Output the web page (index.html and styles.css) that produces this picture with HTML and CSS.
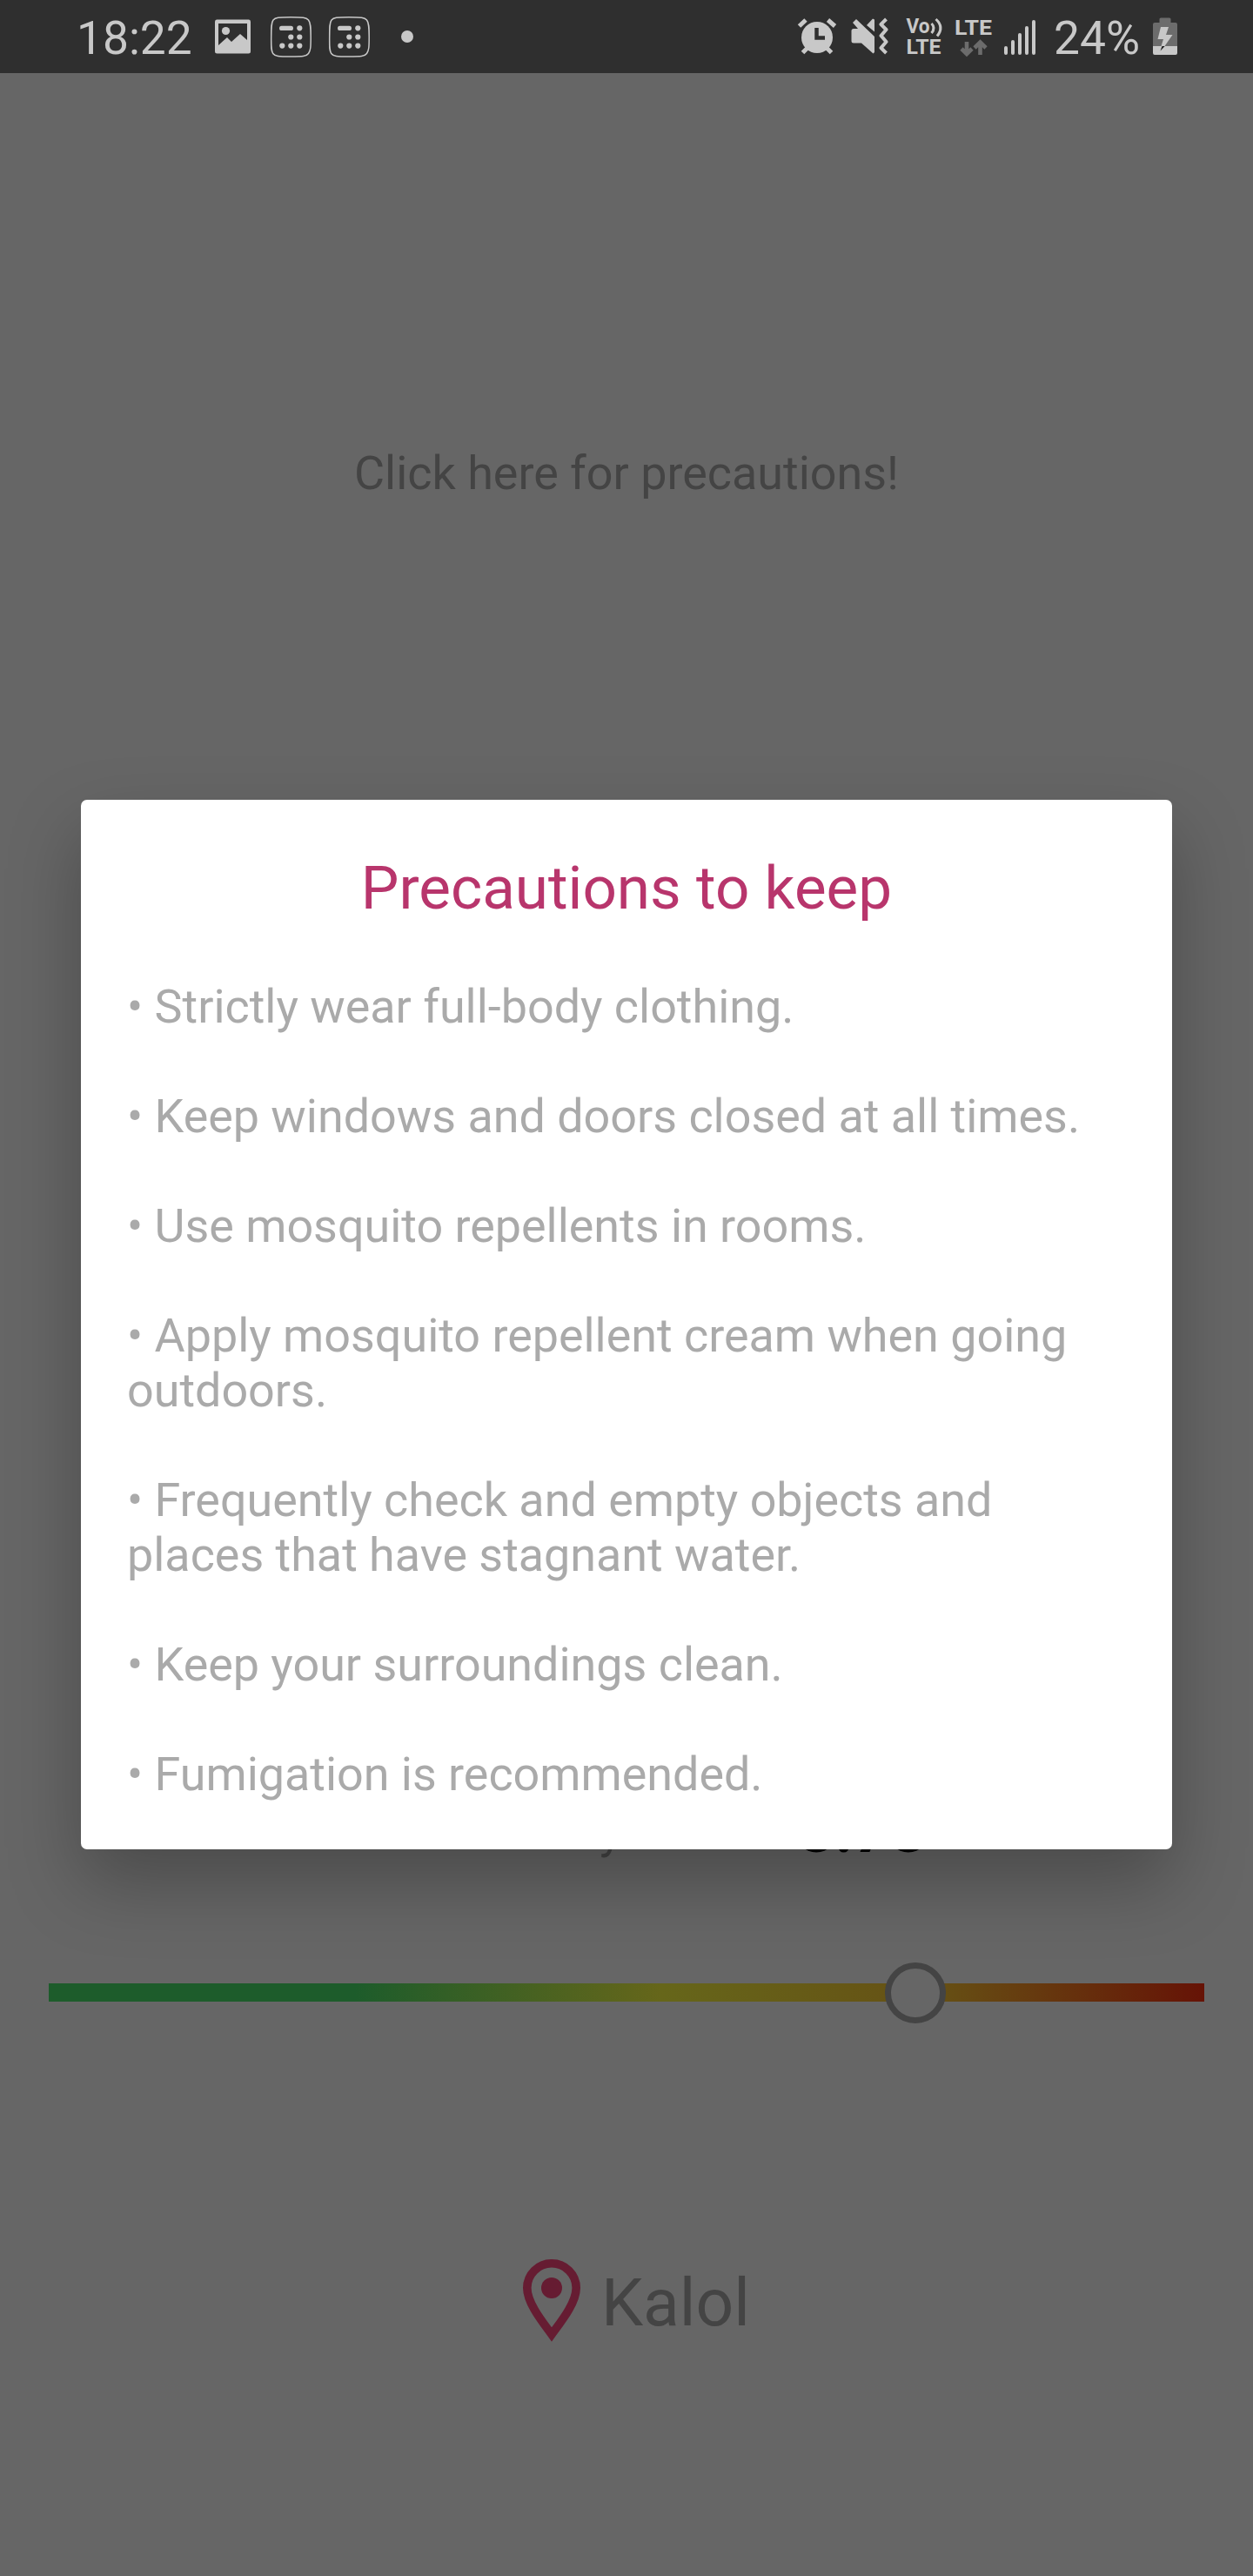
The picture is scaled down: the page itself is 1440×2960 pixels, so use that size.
FILE: index.html
```html
<!DOCTYPE html>
<html lang="en">
<head>
<meta charset="utf-8">
<title>Precautions</title>
<link rel="stylesheet" href="styles.css">
</head>
<body>
<header class="status">
  <span class="time">18:22</span>
  <svg class="left-icons" width="236" height="84" viewBox="240 0 236 84">
    <path fill="#c8c8c8" fill-rule="evenodd" d="M249 22.500H286Q288 22.500 288 25V59Q288 61.500 285.500 61.500H249.500Q247 61.500 247 59V25Q247 22.500 249 22.500ZM251 27V52L261 43L266 48L276 39L284 46V27Z"/>
    <circle cx="259.500" cy="35.500" r="4.600" fill="#c8c8c8"/>
    <g id="keypad">
      <path d="M334 19.700C348 19.700 352 20 354.500 23S357.200 31 357.200 42.500S357 58 354.500 61.500S348 65 334 65S316 64.700 313.700 61.500S311.700 54 311.700 42.500S311.700 26 314 23S320 19.700 334 19.700Z" fill="none" stroke="#c8c8c8" stroke-width="1.500"/>
      <g fill="#c8c8c8"><rect x="321" y="29.800" width="16" height="5.200" rx="2.600"/><circle cx="344.300" cy="32.300" r="3.100"/><circle cx="334.300" cy="42.500" r="3.100"/><circle cx="344.300" cy="42.500" r="3.100"/><circle cx="324.300" cy="52.600" r="3.100"/><circle cx="334.300" cy="52.600" r="3.100"/><circle cx="344.300" cy="52.600" r="3.100"/></g>
    </g>
    <use href="#keypad" x="67"/>
    <circle cx="468" cy="42" r="7" fill="#c8c8c8"/>
  </svg>
  <svg class="right-icons" width="275" height="84" viewBox="915 0 275 84">
    <g fill="#c8c8c8" stroke="#c8c8c8">
      <circle cx="939" cy="43" r="18" stroke="none"/>
      <path fill="none" stroke-width="5" d="M918.500 30L926 23M951.500 23L959.500 30M928 55L922.500 60.500M950 55L955.500 60.500"/>
      <path fill="none" stroke="#2f2f2f" stroke-width="4.500" d="M938.500 32V43.500H948"/>
      <path stroke="none" d="M981 33H986L980 26L984 22L1005 42V60L1003.500 61.500L990 49.500H981Q978.500 49.500 978.500 47V35.500Q978.500 33 981 33ZM996 29L1003 21.500L1005 22.500V36.500Z"/>
      <path fill="none" stroke-width="4" stroke-linejoin="round" d="M1018.500 22L1012.500 28L1018.500 34L1012.500 41L1018.500 48L1012.500 55L1018.500 61"/>
      <path fill="none" stroke-width="3" d="M1070.500 27Q1075.500 32 1070.500 38M1075.500 22Q1085.500 31 1077 41.500"/>
    </g>
    <g class="tiny">
      <text x="1041.500" y="38" textLength="27" lengthAdjust="spacingAndGlyphs">Vo</text>
      <text x="1041.500" y="62" textLength="40" lengthAdjust="spacingAndGlyphs">LTE</text>
      <text x="1097" y="40" textLength="43" lengthAdjust="spacingAndGlyphs">LTE</text>
    </g>
    <g stroke="#6c6c6c" stroke-width="4.600" fill="none"><path d="M1111 48V62M1105 56L1111 62L1117 56M1126.500 63V49M1120 55L1126.500 48.500L1133 55"/></g>
    <g fill="#c8c8c8"><rect x="1154" y="53" width="4" height="10" rx="2"/><rect x="1162" y="46" width="4" height="17" rx="2"/><rect x="1170" y="38" width="4" height="25" rx="2"/><rect x="1178" y="30" width="4" height="33" rx="2"/><rect x="1186" y="23" width="4" height="40" rx="2"/></g>
  </svg>
  <span class="percent">24%</span>
  <svg class="battery" width="28" height="84" viewBox="1325 0 28 84">
    <path fill="#6c6c6c" d="M1334 20.500H1344Q1345.500 20.500 1345.500 22V26H1351Q1353 26 1353 28V53H1325V28Q1325 26 1327 26H1332.500V22Q1332.500 20.500 1334 20.500Z"/>
    <path fill="#c8c8c8" d="M1325 53H1353V61Q1353 63 1351 63H1327Q1325 63 1325 61ZM1334 31H1343L1340 40H1347.500L1338.500 53H1334.500L1337 45H1330.500Z"/>
    <path fill="#1d1d1d" d="M1335.500 53H1338.700L1333.500 58.500Z"/>
  </svg>
</header>
<main class="screen">
  <p class="hint">Click here for precautions!</p>
  <p class="severity"><span class="label">Severity</span><span class="value">8.78</span></p>
  <div class="scale"><span class="thumb"></span></div>
  <div class="place">
    <svg width="68" height="96" viewBox="600 2595 68 96"><path fill="none" stroke="#661c32" stroke-width="9.600" d="M634 2682.500C625 2670 605.800 2647 605.800 2629A28.200 28.200 0 0 1 662.200 2629C662.200 2647 643 2670 634 2682.500Z"/><circle cx="634" cy="2629" r="12" fill="#661c32"/></svg>
    <span>Kalol</span>
  </div>
  <section class="dialog">
    <h1>Precautions to keep</h1>
    <ul>
      <li>• Strictly wear full-body clothing.</li>
      <li>• Keep windows and doors closed at all times.</li>
      <li>• Use mosquito repellents in rooms.</li>
      <li>• Apply mosquito repellent cream when going<br>outdoors.</li>
      <li>• Frequently check and empty objects and<br>places that have stagnant water.</li>
      <li>• Keep your surroundings clean.</li>
      <li>• Fumigation is recommended.</li>
    </ul>
  </section>
</main>
</body>
</html>
```
FILE: styles.css
```css
* { box-sizing: border-box; }
body { margin: 0; width: 1440px; height: 2960px; background: #666; font-family: Roboto, sans-serif; overflow: hidden; }
.status { display: flex; height: 84px; background: #2f2f2f; color: #c8c8c8; font-size: 53.3px; line-height: 84px; padding: 2px 87px 0 88px; }
.status svg { margin-top: -2px; flex: none; }
.time { width: 152px; }
.right-icons { margin-left: auto; }
.percent { width: 135px; padding-left: 21px; white-space: nowrap; }
.tiny { font-size: 24.5px; font-weight: 700; fill: #c8c8c8; }
.screen { position: relative; height: 2876px; }
p { margin: 0; }
.hint { padding-top: 428px; height: 1974px; line-height: 63px; font-size: 53.9px; color: #444; text-align: center; }
.severity { display: flex; align-items: flex-start; height: 221px; padding-left: 525px; line-height: 100px; color: #444; }
.label { width: 392px; margin-top: -3px; font-size: 54px; }
.value { margin-top: -5px; font-size: 73.5px; font-weight: 700; color: #000; }
.scale { display: flex; align-items: center; margin: 0 56px; height: 21px; padding-left: 961px; background: linear-gradient(90deg, #1d5c2b 0 26.500%, #66661a 53%, #665014 77%, #661306); }
.thumb { width: 70px; height: 70px; flex: none; border: 7px solid #444; border-radius: 50%; background: #666; }
.place { display: flex; align-items: flex-start; margin: 295px 0 0 600px; color: #444; font-size: 76.7px; line-height: 103px; gap: 23px; }
.dialog { position: absolute; left: 93px; top: 835px; width: 1254px; height: 1206px; padding: 61px 53px; background: #fff; border-radius: 7px; box-shadow: 0 38px 84px rgba(0,0,0,.27); }
h1 { margin: 0; font-size: 69.2px; font-weight: 400; line-height: 82px; text-align: center; color: #b8356c; }
ul { list-style: none; margin: 63px 0 0; padding: 0; display: flex; flex-direction: column; gap: 63px; font-size: 53.87px; line-height: 63px; color: #aaa; }
li { white-space: nowrap; }
```
